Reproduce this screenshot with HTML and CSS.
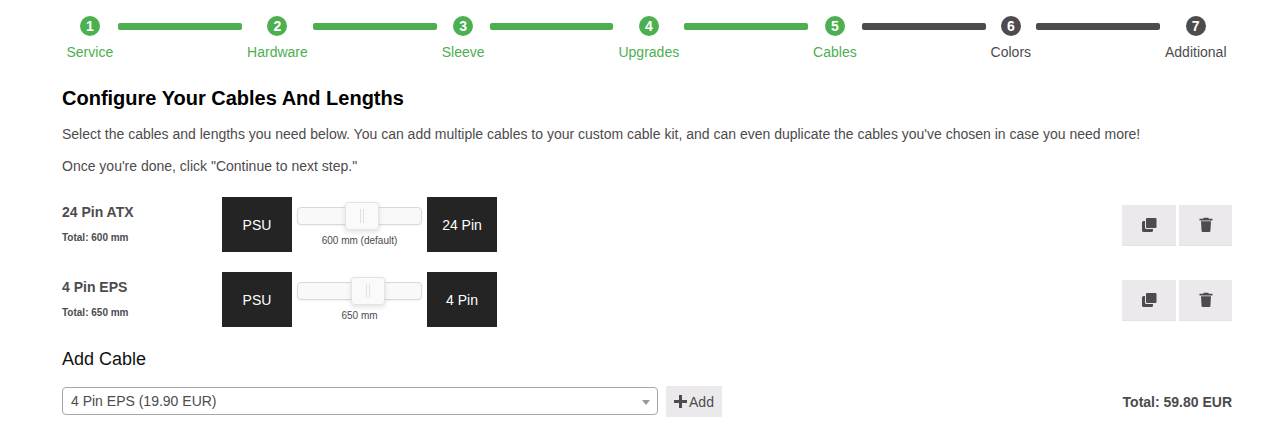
FILE: index.html
```html
<!DOCTYPE html>
<html lang="en">
<head>
<meta charset="utf-8">
<title>Configure Your Cables And Lengths</title>
<link rel="stylesheet" href="styles.css">
</head>
<body>
<main class="page">
  <nav class="steps">
    <div class="step done"><span class="dot">1</span><span class="step-label">Service</span></div>
    <span class="bar done"></span>
    <div class="step done"><span class="dot">2</span><span class="step-label">Hardware</span></div>
    <span class="bar done"></span>
    <div class="step done"><span class="dot">3</span><span class="step-label">Sleeve</span></div>
    <span class="bar done"></span>
    <div class="step done"><span class="dot">4</span><span class="step-label">Upgrades</span></div>
    <span class="bar done"></span>
    <div class="step done"><span class="dot">5</span><span class="step-label">Cables</span></div>
    <span class="bar"></span>
    <div class="step"><span class="dot">6</span><span class="step-label">Colors</span></div>
    <span class="bar"></span>
    <div class="step"><span class="dot">7</span><span class="step-label">Additional</span></div>
  </nav>

  <h1 class="title">Configure Your Cables And Lengths</h1>
  <p class="text first">Select the cables and lengths you need below. You can add multiple cables to your custom cable kit, and can even duplicate the cables you've chosen in case you need more!</p>
  <p class="text">Once you're done, click "Continue to next step."</p>

  <section class="cables">
    <div class="cable">
      <div class="cable-info">
        <div class="cable-name">24 Pin ATX</div>
        <div class="cable-total">Total: 600 mm</div>
      </div>
      <div class="connector">PSU</div>
      <div class="slider">
        <div class="track"><span class="thumb" style="left:47px"><i class="grip"></i></span></div>
        <div class="slider-caption">600 mm (default)</div>
      </div>
      <div class="connector">24 Pin</div>
      <div class="actions">
        <button class="icon-btn" type="button" aria-label="Duplicate">
          <svg class="icon" viewBox="0 0 16 16"><path d="M1 5.500A1.500 1.500 0 0 1 2.500 4H4v6.500A1.500 1.500 0 0 0 5.500 12H12v1.500A1.500 1.500 0 0 1 10.500 15h-8A1.500 1.500 0 0 1 1 13.500z"/><rect x="5" y="1" width="10.500" height="10" rx="1"/></svg>
        </button>
        <button class="icon-btn" type="button" aria-label="Delete">
          <svg class="icon" viewBox="0 0 16 16"><path d="M5.800.8h4.400l.8 1h3.500v1.800H1.500V1.800H5zM3 4.300h10l-.6 9.700a1 1 0 0 1-1 1H4.600a1 1 0 0 1-1-1z"/></svg>
        </button>
      </div>
    </div>
    <div class="cable">
      <div class="cable-info">
        <div class="cable-name">4 Pin EPS</div>
        <div class="cable-total">Total: 650 mm</div>
      </div>
      <div class="connector">PSU</div>
      <div class="slider">
        <div class="track"><span class="thumb" style="left:53px"><i class="grip"></i></span></div>
        <div class="slider-caption">650 mm</div>
      </div>
      <div class="connector">4 Pin</div>
      <div class="actions">
        <button class="icon-btn" type="button" aria-label="Duplicate">
          <svg class="icon" viewBox="0 0 16 16"><path d="M1 5.500A1.500 1.500 0 0 1 2.500 4H4v6.500A1.500 1.500 0 0 0 5.500 12H12v1.500A1.500 1.500 0 0 1 10.500 15h-8A1.500 1.500 0 0 1 1 13.500z"/><rect x="5" y="1" width="10.500" height="10" rx="1"/></svg>
        </button>
        <button class="icon-btn" type="button" aria-label="Delete">
          <svg class="icon" viewBox="0 0 16 16"><path d="M5.800.8h4.400l.8 1h3.500v1.800H1.500V1.800H5zM3 4.300h10l-.6 9.700a1 1 0 0 1-1 1H4.600a1 1 0 0 1-1-1z"/></svg>
        </button>
      </div>
    </div>
  </section>

  <h2 class="subtitle">Add Cable</h2>
  <div class="add-row">
    <div class="select-wrap">
      <select class="select">
        <option>4 Pin EPS (19.90 EUR)</option>
      </select>
    </div>
    <button class="add-btn" type="button">
      <svg class="plus" viewBox="0 0 13 13"><path d="M5 0h3v5h5v3H8v5H5V8H0V5h5z"/></svg>Add
    </button>
    <div class="grand-total">Total: 59.80 EUR</div>
  </div>
</main>
</body>
</html>
```
FILE: styles.css
```css
* { box-sizing: border-box; }
html, body { margin: 0; padding: 0; background: #fff; }
body {
  font-family: "Liberation Sans", Arial, sans-serif;
  font-size: 14px;
  color: #4d4b4d;
  height: 433px;
  overflow: hidden;
}
.page { padding: 16px 31px 0 62px; }

.steps { display: flex; align-items: flex-start; padding: 0 5.5px 0 4.5px; }
.step { display: flex; flex-direction: column; align-items: center; color: #4d4b4d; }
.step.done { color: #4caf50; }
.dot {
  width: 20px; height: 20px; border-radius: 50%;
  background: #4d4b4d; color: #fff;
  font-size: 14px; font-weight: 700; line-height: 20px; text-align: center;
}
.step.done .dot { background: #4caf50; }
.step-label { margin-top: 8px; line-height: 16px; white-space: nowrap; }
.bar { flex: 1; height: 7px; margin: 7px 5px 0; border-radius: 2px; background: #4d4b4d; }
.bar.done { background: #4caf50; }

.title { margin: 26px 0 0; font-size: 20px; line-height: 24px; font-weight: 700; color: #000; }
.text { margin: 16px 0 0; line-height: 16px; color: #4d4b4d; }
.text.first { margin-top: 16px; }

.cables { display: flex; flex-direction: column; gap: 20px; margin-top: 23px; }
.cable { display: flex; height: 55px; }
.cable-info { width: 160px; padding-top: 7px; color: #4d4b4d; font-weight: 700; }
.cable-name { font-size: 14px; line-height: 16px; }
.cable-total { margin-top: 12px; font-size: 10px; line-height: 12px; }
.connector {
  width: 70px; height: 55px;
  display: flex; align-items: center; justify-content: center;
  background: #242424; color: #fff;
}
.slider { width: 125px; margin: 0 5px; padding-top: 10px; }
.track {
  position: relative; height: 18px;
  background: #f9f9f9; border: 1px solid #d9d9d9; border-radius: 4px;
  box-shadow: 0 1px 2px rgba(0,0,0,.05);
}
.thumb {
  position: absolute; top: -6px; width: 34px; height: 28px;
  display: flex; align-items: center; justify-content: center;
  background: #fafafa; border: 1px solid #e4e4e4; border-radius: 3px;
  box-shadow: 0 2px 5px rgba(0,0,0,.12);
}
.grip { width: 4px; height: 14px; border-left: 1px solid #e2e2e2; border-right: 1px solid #e2e2e2; }
.slider-caption { margin-top: 10px; text-align: center; font-size: 10px; line-height: 12px; color: #4d4b4d; }

.actions { margin-left: auto; display: flex; gap: 3px; padding-top: 8px; }
.icon-btn {
  width: 54px; height: 41px; padding: 0; border: 0;
  display: flex; align-items: center; justify-content: center;
  background: #ebe9eb; border-bottom: 1px solid #e4e2e4;
}
.actions .icon-btn:last-child { width: 53px; }
.icon { width: 16px; height: 16px; fill: #4d4b4d; }

.subtitle { margin: 22px 0 0; font-size: 18px; line-height: 20px; font-weight: 400; color: #111; }
.add-row { display: flex; align-items: flex-start; margin-top: 17px; height: 31px; }
.select-wrap { position: relative; width: 596px; margin-top: 1px; }
.select-wrap::after {
  content: ""; position: absolute; right: 8px; top: 13px;
  border-left: 4px solid transparent; border-right: 4px solid transparent;
  border-top: 5px solid #999;
}
.select {
  display: block; width: 100%; height: 28px; padding: 0 8px;
  appearance: none; background: #fff;
  border: 1px solid #a6a6a6; border-radius: 4px;
  font: 14px "Liberation Sans", Arial, sans-serif; color: #4d4b4d;
}
.add-btn {
  width: 56px; height: 31px; margin-left: 8px; padding: 0;
  display: flex; align-items: center; justify-content: center; gap: 2px;
  background: #ebe9eb; border: 0;
  font: 14px "Liberation Sans", Arial, sans-serif; color: #4d4b4d;
}
.plus { width: 13px; height: 13px; fill: #4d4b4d; }
.grand-total { margin-left: auto; align-self: center; font-weight: 700; color: #4d4b4d; }
```
